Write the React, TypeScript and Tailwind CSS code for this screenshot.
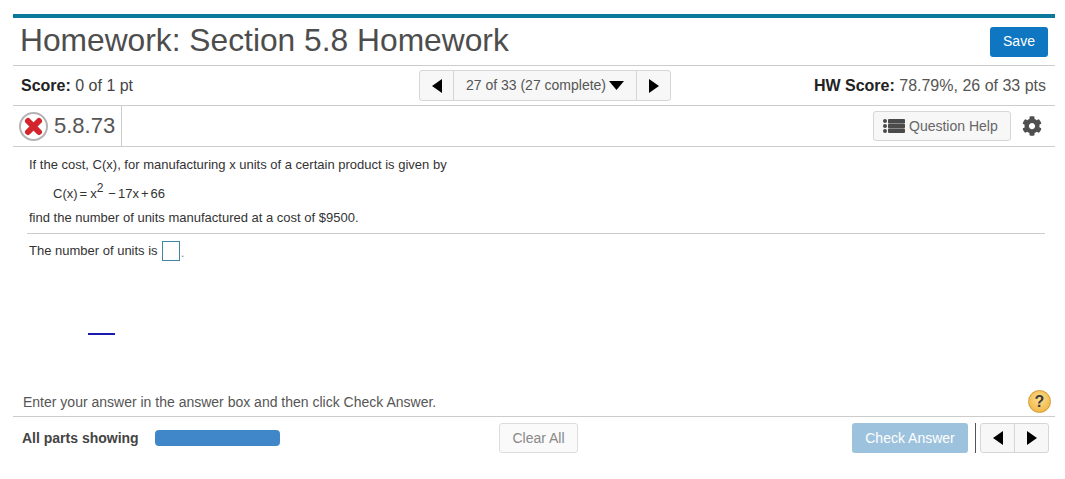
import React from "react";
import { FaCog } from "react-icons/fa";

function ArrowLeft() {
  return (
    <svg width="10" height="14" viewBox="0 0 10 14" className="fill-black">
      <path d="M10 0V14L0 7Z" />
    </svg>
  );
}

function ArrowRight() {
  return (
    <svg width="10" height="14" viewBox="0 0 10 14" className="fill-black">
      <path d="M0 0V14L10 7Z" />
    </svg>
  );
}

function ListIcon() {
  return (
    <svg width="22" height="14" viewBox="0 0 22 14" className="fill-[#4a4a4a]">
      <circle cx="2" cy="2" r="2" />
      <circle cx="2" cy="7" r="2" />
      <circle cx="2" cy="12" r="2" />
      <rect x="5" y="0" width="17" height="4.4" rx="1" />
      <rect x="5" y="4.8" width="17" height="4.4" rx="1" />
      <rect x="5" y="9.6" width="17" height="4.4" rx="1" />
    </svg>
  );
}

function WrongIcon() {
  return (
    <div className="flex h-[29px] w-[29px] items-center justify-center rounded-full border-2 border-[#b4b4b4] bg-white">
      <svg width="21" height="21" viewBox="0 0 21 21">
        <path d="M5 5L16 16M16 5L5 16" stroke="#d4242c" strokeWidth="6" strokeLinecap="round" />
      </svg>
    </div>
  );
}

function HelpIcon() {
  return (
    <div className="mt-[4px] flex h-[23px] w-[23px] items-center justify-center rounded-full border border-[#cf9a33] bg-[radial-gradient(circle_at_50%_40%,#fddf8f,#eeac35)] text-[16px] leading-none font-bold text-[#3a3a3a]">
      ?
    </div>
  );
}

export default function App() {
  return (
    <div className="h-[479px] w-[1065px] overflow-hidden bg-white pt-[14px] pl-[13px] font-['Liberation_Sans',Arial,sans-serif] text-[#4a4a4a]">
      <div className="w-[1042px]">
        <div className="h-[4px] bg-[#0b7a9a]" />

        <div className="flex h-[48px] items-center justify-between border-b border-[#ccc] pr-[7px] pl-[7px]">
          <h1 className="pb-[2px] text-[31.75px] leading-none font-normal text-[#4d4d4d]">Homework: Section 5.8 Homework</h1>
          <button className="h-[30px] w-[58px] rounded-[3px] bg-[#0f76c2] text-[14px] text-white">Save</button>
        </div>

        <div className="flex h-[40px] items-center border-b border-[#ccc] pr-[9px] pl-[8px] text-[16px]">
          <div className="w-[398px] text-[#444]">
            <span className="font-bold text-[#222]">Score:</span> 0 of 1 pt
          </div>
          <div className="flex h-[31px] items-stretch rounded-[3px] border border-[#d6d6d6] bg-[#f7f7f7]">
            <div className="flex w-[34px] items-center justify-center border-r border-[#d6d6d6]">
              <ArrowLeft />
            </div>
            <div className="flex w-[183px] items-center justify-center gap-[3px] border-r border-[#d6d6d6] text-[14px] text-[#555]">
              27 of 33 (27 complete)
              <svg width="15" height="9" viewBox="0 0 15 9" className="fill-black">
                <path d="M0 0H15L7.5 9Z" />
              </svg>
            </div>
            <div className="flex w-[33px] items-center justify-center">
              <ArrowRight />
            </div>
          </div>
          <div className="flex flex-1 justify-end text-[#555]">
            <span className="font-bold text-[#222]">HW Score:</span>&nbsp;78.79%, 26 of 33 pts
          </div>
        </div>

        <div className="flex h-[41px] items-center justify-between border-b border-[#ccc] pr-[13px] pl-[6px]">
          <div className="flex h-[40px] items-center gap-[6px] border-r border-[#ccc] pr-[6px]">
            <WrongIcon />
            <span className="text-[22px] leading-none text-[#555]">5.8.73</span>
          </div>
          <div className="flex items-center gap-[11px]">
            <button className="flex h-[30px] w-[138px] items-center gap-[4px] rounded-[3px] border border-[#d6d6d6] bg-[#f7f7f7] pl-[9px] text-[14px] text-[#666]">
              <ListIcon />
              Question Help
            </button>
            <FaCog className="h-[20px] w-[20px] text-[#4f4f4f]" />
          </div>
        </div>

        <div className="px-[16px] pt-[10px] text-[13px] leading-[16px] text-[#333]">
          <p className="h-[16px]">If the cost, C(x), for manufacturing x units of a certain product is given by</p>
          <p className="mt-[13px] flex h-[16px] pl-[24px]">
            <span>C(x)</span>
            <span className="mr-[3px] ml-[2px]">=</span>
            <span>x</span>
            <sup className="top-[-6px] text-[12px] leading-[16px]">2</sup>
            <span className="mr-[2px] ml-[5px]">−</span>
            <span>17x</span>
            <span className="mr-[2px] ml-[2px]">+</span>
            <span>66</span>
          </p>
          <p className="mt-[8px] h-[16px]">find the number of units manufactured at a cost of $9500.</p>
          <div className="mt-[7px] mr-[-6px] ml-[-2px] border-t border-[#ccc]" />
          <div className="mt-[7px] flex h-[20px] items-center">
            The number of units is
            <span className="mr-[1px] ml-[4px] block h-[20px] w-[18px] border border-[#3f86a3] bg-white" />
            <span className="self-end text-[#888]">.</span>
          </div>
          <div className="mt-[72px] ml-[59px] h-[2px] w-[27px] bg-[#1a1ab0]" />
        </div>

        <div className="mt-[48px] flex h-[34px] items-center justify-between border-b border-[#ccc] pr-[4px] pl-[10px] text-[14px] text-[#555]">
          <span className="pt-[5px]">Enter your answer in the answer box and then click Check Answer.</span>
          <HelpIcon />
        </div>

        <div className="flex items-center pt-[6px] pl-[9px] text-[14px]">
          <span className="w-[133px] font-bold text-[#444]">All parts showing</span>
          <div className="h-[16px] w-[125px] rounded-[4px] bg-[#3f87c9]" />
          <button className="ml-[219px] h-[30px] w-[79px] rounded-[3px] border border-[#ddd] bg-[#fafafa] text-[14px] text-[#888]">Clear All</button>
          <button className="ml-[274px] h-[30px] w-[116px] rounded-[3px] bg-[#9dc2de] text-[14px] text-white">Check Answer</button>
          <div className="ml-[7px] h-[30px] w-px bg-[#555]" />
          <div className="ml-[4px] flex h-[30px] w-[69px] items-stretch rounded-[3px] border border-[#d6d6d6] bg-[#f7f7f7]">
            <div className="flex flex-1 items-center justify-center border-r border-[#d6d6d6]">
              <ArrowLeft />
            </div>
            <div className="flex flex-1 items-center justify-center">
              <ArrowRight />
            </div>
          </div>
        </div>
      </div>
    </div>
  );
}
